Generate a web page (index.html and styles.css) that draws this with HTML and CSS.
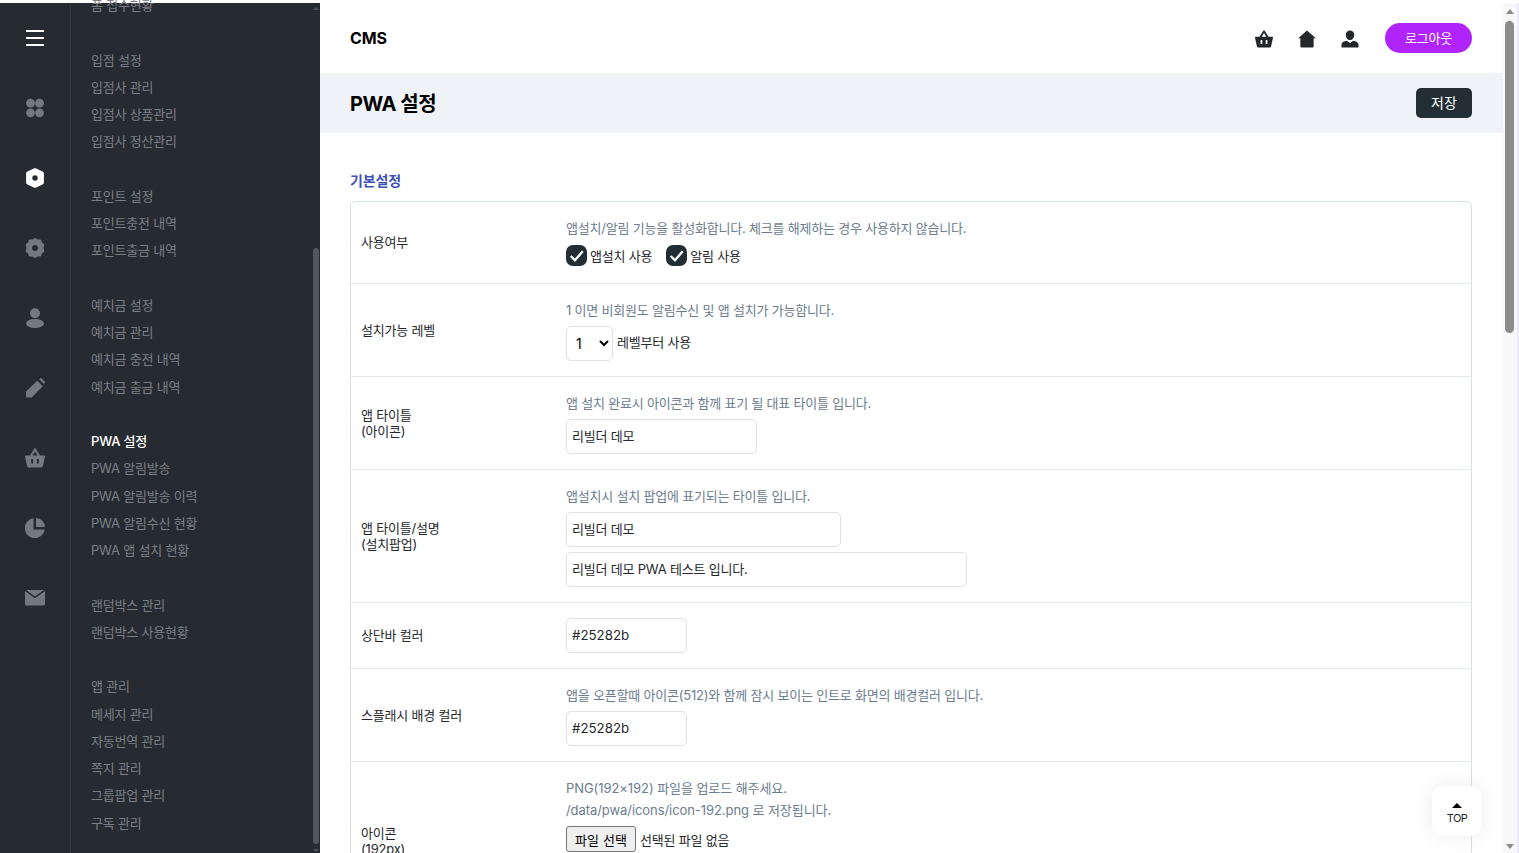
FILE: index.html
```html
<!DOCTYPE html>
<html lang="ko">
<head>
<meta charset="utf-8">
<title>PWA 설정</title>
<link rel="stylesheet" href="styles.css">
</head>
<body>
<div class="app">
  <aside class="sidebar">
    <nav class="rail">
      <a class="rail-item"><svg class="ic" viewBox="0 0 20 20"><path d="M1 2h18v2H1zM1 9h18v2H1zM1 16h18v2H1z" fill="#fff"/></svg></a>
      <a class="rail-item"><svg class="ic" viewBox="0 0 20 20"><g fill="#75797e"><circle cx="5.500" cy="5.200" r="4.400"/><circle cx="14.500" cy="5.200" r="4.400"/><circle cx="5.500" cy="14.800" r="4.400"/><circle cx="14.500" cy="14.800" r="4.400"/></g></svg></a>
      <a class="rail-item"><svg class="ic" viewBox="0 0 20 20"><path fill="#fff" fill-rule="evenodd" d="M8.800.5c.8-.4 1.600-.4 2.400 0l6.300 3.100c.8.400 1.400 1 1.400 1.900v9c0 .9-.6 1.500-1.400 1.900l-6.300 3.100c-.8.400-1.600.4-2.400 0l-6.300-3.100C1.700 16 1.100 15.400 1.100 14.500v-9c0-.9.6-1.500 1.400-1.900zM10 7.300a2.700 2.700 0 100 5.400 2.700 2.700 0 000-5.400z"/></svg></a>
      <a class="rail-item"><svg class="ic" viewBox="0 0 20 20"><path fill="#75797e" fill-rule="evenodd" d="M10 0c1 0 1.700 1.200 2.700 1.500 1 .3 2.300-.3 3.100.3.800.6.600 2 1.200 2.800.6.800 2 1.100 2.300 2.100.3 1-.7 2-.7 3.300s1 2.300.7 3.300c-.3 1-1.700 1.300-2.300 2.100-.6.800-.4 2.200-1.200 2.800-.8.600-2.100 0-3.100.3-1 .3-1.700 1.500-2.700 1.500s-1.700-1.200-2.700-1.500c-1-.3-2.300.3-3.100-.3-.8-.6-.6-2-1.200-2.800-.6-.8-2-1.100-2.300-2.100-.3-1 .7-2 .7-3.300s-1-2.300-.7-3.300c.3-1 1.700-1.300 2.300-2.100.6-.8.4-2.200 1.200-2.800.8-.6 2.100 0 3.100-.3C8.300 1.200 9 0 10 0zM10 7a3 3 0 100 6 3 3 0 000-6z"/></svg></a>
      <a class="rail-item"><svg class="ic" viewBox="0 0 20 20"><circle cx="10" cy="5.200" r="5" fill="#75797e"/><ellipse cx="10" cy="15.500" rx="9" ry="4.500" fill="#75797e"/></svg></a>
      <a class="rail-item"><svg class="ic" viewBox="0 0 20 20"><path fill="#75797e" d="M1 13.500L12.300 2.800l5.400 5.400L6.800 19.500H2c-.6 0-1-.4-1-1zM14.200 1.300L15.300.2c.3-.3.800-.3 1.100 0l3.500 3.500c.3.300.3.800 0 1.100l-1.100 1.100z"/></svg></a>
      <a class="rail-item"><svg class="ic" viewBox="0 0 20 20"><path fill="#75797e" fill-rule="evenodd" d="M5 7.500L9.200.7c.4-.6 1.200-.6 1.600 0L15 7.500h4.200c.6 0 .9.500.8 1L17.900 18c-.2.900-.9 1.500-1.800 1.500H3.900c-.9 0-1.600-.6-1.800-1.500L0 8.500c-.1-.5.200-1 .8-1zM7.500 7.500h5L10 3.400zM6.200 11v4.500h1.900V11zM11.900 11v4.500h1.900V11z"/></svg></a>
      <a class="rail-item"><svg class="ic" viewBox="0 0 20 20"><path fill="#75797e" d="M8.500.3v11.200h11.200A10 10 0 118.500.300zM11 0a9 9 0 019 9h-9z"/></svg></a>
      <a class="rail-item"><svg class="ic" viewBox="0 0 20 20"><path fill="#75797e" d="M0 3l10 7.200L20 3v13c0 .8-.7 1.500-1.500 1.500h-17C.7 17.500 0 16.800 0 16zM1.200 2h17.600L10 8.600z"/></svg></a>
    </nav>
    <div class="submenu">
      <ul class="menu">
        <li>폼 접수현황</li><li class="gap"></li>
        <li>입점 설정</li><li>입점사 관리</li><li>입점사 상품관리</li><li>입점사 정산관리</li><li class="gap"></li>
        <li>포인트 설정</li><li>포인트충전 내역</li><li>포인트출금 내역</li><li class="gap"></li>
        <li>예치금 설정</li><li>예치금 관리</li><li>예치금 충전 내역</li><li>예치금 출금 내역</li><li class="gap"></li>
        <li class="active">PWA 설정</li><li>PWA 알림발송</li><li>PWA 알림발송 이력</li><li>PWA 알림수신 현황</li><li>PWA 앱 설치 현황</li><li class="gap"></li>
        <li>랜덤박스 관리</li><li>랜덤박스 사용현황</li><li class="gap"></li>
        <li>앱 관리</li><li>메세지 관리</li><li>자동번역 관리</li><li>쪽지 관리</li><li>그룹팝업 관리</li><li>구독 관리</li>
      </ul>
      <div class="side-scroll">
        <span class="tri up"></span>
        <div class="side-track"><div class="side-thumb"></div></div>
        <span class="tri down"></span>
      </div>
    </div>
  </aside>
  <main class="main">
    <header class="topbar">
      <strong class="brand">CMS</strong>
      <div class="top-actions">
        <svg class="top-ic" viewBox="0 0 20 20"><path fill="#25282b" fill-rule="evenodd" d="M5 7.500L9.200.7c.4-.6 1.200-.6 1.600 0L15 7.500h4.200c.6 0 .9.500.8 1L17.900 18c-.2.900-.9 1.500-1.800 1.500H3.900c-.9 0-1.600-.6-1.800-1.500L0 8.500c-.1-.5.200-1 .8-1zM7.500 7.500h5L10 3.400zM6.200 11v4.500h1.900V11zM11.900 11v4.500h1.900V11z"/></svg>
        <svg class="top-ic" viewBox="0 0 20 20"><path fill="#25282b" d="M10 .5l9.800 8.700H17.400V18c0 .8-.6 1.500-1.500 1.500H4.100c-.9 0-1.500-.7-1.500-1.500V9.200H.2z"/></svg>
        <svg class="top-ic" viewBox="0 0 20 20"><path fill="#25282b" d="M10 .5a4.700 4.700 0 014.700 4.700c0 3-2 6-4.700 6s-4.700-3-4.700-6A4.700 4.700 0 0110 .5zM6.500 12l3.500 2.500 3.500-2.500c3 .5 6 1.800 6 4.500V19c0 .3-.2.500-.5.500H1c-.3 0-.5-.2-.5-.5v-2.500c0-2.700 3-4 6-4.500z"/></svg>
        <a class="logout">로그아웃</a>
      </div>
    </header>
    <div class="title-bar">
      <h1>PWA 설정</h1>
      <button class="save">저장</button>
    </div>
    <section class="content">
      <h2>기본설정</h2>
      <div class="table">
        <div class="row r1">
          <div class="th">사용여부</div>
          <div class="td">
            <p class="help">앱설치/알림 기능을 활성화합니다. 체크를 해제하는 경우 사용하지 않습니다.</p>
            <div class="checks">
              <label class="check"><span class="box"><svg viewBox="0 0 20 20"><path d="M4.500 10.500l4 4L16 6" fill="none" stroke="#fff" stroke-width="2.200"/></svg></span>앱설치 사용</label>
              <label class="check"><span class="box"><svg viewBox="0 0 20 20"><path d="M4.500 10.500l4 4L16 6" fill="none" stroke="#fff" stroke-width="2.200"/></svg></span>알림 사용</label>
            </div>
          </div>
        </div>
        <div class="row r2">
          <div class="th">설치가능 레벨</div>
          <div class="td">
            <p class="help">1 이면 비회원도 알림수신 및 앱 설치가 가능합니다.</p>
            <div class="inline"><select class="sel"><option>1</option></select><span class="inline-text">레벨부터 사용</span></div>
          </div>
        </div>
        <div class="row r2">
          <div class="th">앱 타이틀<br>(아이콘)</div>
          <div class="td">
            <p class="help">앱 설치 완료시 아이콘과 함께 표기 될 대표 타이틀 입니다.</p>
            <input class="inp w191" value="리빌더 데모">
          </div>
        </div>
        <div class="row r4">
          <div class="th">앱 타이틀/설명<br>(설치팝업)</div>
          <div class="td">
            <p class="help">앱설치시 설치 팝업에 표기되는 타이틀 입니다.</p>
            <input class="inp w275" value="리빌더 데모">
            <input class="inp w401" value="리빌더 데모 PWA 테스트 입니다.">
          </div>
        </div>
        <div class="row r5">
          <div class="th">상단바 컬러</div>
          <div class="td"><input class="inp w121 code" value="#25282b"></div>
        </div>
        <div class="row r2">
          <div class="th">스플래시 배경 컬러</div>
          <div class="td">
            <p class="help">앱을 오픈할때 아이콘(512)와 함께 잠시 보이는 인트로 화면의 배경컬러 입니다.</p>
            <input class="inp w121 code" value="#25282b">
          </div>
        </div>
        <div class="row r7">
          <div class="th">아이콘<br>(192px)</div>
          <div class="td td-top">
            <p class="help latin">PNG(192×192) 파일을 업로드 해주세요.</p>
            <p class="help latin">/data/pwa/icons/icon-192.png 로 저장됩니다.</p>
            <div class="file"><span class="file-btn">파일 선택</span><span>선택된 파일 없음</span></div>
          </div>
        </div>
      </div>
    </section>
    <a class="top-btn"><span class="top-arr"></span>TOP</a>
  </main>
  <div class="page-scroll">
    <span class="arr up"></span>
    <div class="page-track"><div class="page-thumb"></div></div>
    <span class="arr down"></span>
  </div>
</div>
</body>
</html>
```

FILE: styles.css
```css
* { box-sizing: border-box; }
html, body { margin: 0; height: 100%; overflow: hidden; background: #fff; }
body { padding-top: 3px; font-family: Inter, "Noto Sans CJK KR", sans-serif; font-size: 13px; letter-spacing: -0.2px; color: #25282b; }
p, h1, h2, ul { margin: 0; padding: 0; }
.app { display: flex; height: 850px; }

.sidebar { flex: 0 0 320px; display: flex; background: #262b31; }
.rail { flex: 0 0 71px; border-right: 1px solid #353a41; display: flex; flex-direction: column; }
.rail-item { flex: 0 0 70px; display: flex; align-items: center; justify-content: center; }
.ic { width: 20px; height: 20px; display: block; }
.submenu { flex: 1; display: flex; min-width: 0; }
.menu { flex: 1; list-style: none; margin-top: -10.9px; padding-left: 20px; }
.menu li { height: 27.25px; line-height: 27.25px; color: #7a7f85; white-space: nowrap; }
.menu li.active { color: #fff; font-weight: 500; }
.side-scroll { flex: 0 0 9px; display: flex; flex-direction: column; align-items: center; }
.side-track { flex: 1; width: 6px; }
.side-thumb { margin-top: 235px; height: 596px; background: #52565e; border-radius: 3px; }
.tri { flex: 0 0 auto; width: 0; height: 0; border-left: 3px solid transparent; border-right: 3px solid transparent; margin: 4px 0 3px; }
.tri.up { border-bottom: 3px solid #50545b; }
.tri.down { border-top: 3px solid #50545b; margin: 3px 0 1px; }

.main { flex: 1; min-width: 0; position: relative; overflow: hidden; }
.topbar { height: 70px; display: flex; align-items: center; justify-content: space-between; padding: 0 31px 0 30px; }
.brand { font-size: 16px; font-weight: 700; color: #000; letter-spacing: -0.15px; }
.top-actions { display: flex; align-items: center; }
.top-ic { width: 18px; height: 18px; margin: 2px 25px 0 0; display: block; }
.top-ic:nth-of-type(3) { margin-right: 26px; }
.logout { width: 87px; height: 30px; padding-bottom: 2px; border-radius: 15px; background: #b123fb; color: #fff; display: flex; align-items: center; justify-content: center; }

.title-bar { height: 60px; background: #eff3f8; display: flex; align-items: center; justify-content: space-between; padding: 0 31px 0 30px; }
.title-bar h1 { font-size: 20px; font-weight: 700; color: #000; letter-spacing: -0.4px; padding-bottom: 2px; }
.save { width: 56px; height: 30px; padding: 0 0 2px; border: 0; border-radius: 5px; background: #222d34; color: #fff; font: 14px Inter, "Noto Sans CJK KR", sans-serif; }

.content { padding: 38px 31px 0 30px; }
.content h2 { font-size: 14px; font-weight: 600; line-height: 20px; letter-spacing: -0.1px; color: #3f51b5; margin-bottom: 10px; }
.table { border: 1px solid #d9dfe8; border-radius: 5px; }
.row { display: flex; align-items: center; border-bottom: 1px solid #e5e8ee; padding: 0 10px; }
.r1 { height: 82px; padding-bottom: 2px; }
.r2 { height: 93px; }
.r4 { height: 133px; }
.r5 { height: 66px; }
.r5 .th { padding-bottom: 2px; }
.r7 { height: 158px; }
.th { flex: 0 0 205px; line-height: 16px; color: #25282b; }
.td { flex: 1; display: flex; flex-direction: column; align-items: flex-start; }
.td-top { align-self: flex-start; padding-top: 15px; }
.help { line-height: 22px; color: #6b7d8e; }
.help.latin { letter-spacing: -0.07px; }
.checks { display: flex; gap: 14px; margin-top: 6px; }
.check { display: flex; align-items: center; gap: 3px; }
.box { width: 21px; height: 21px; border-radius: 7px; background: #222d34; display: block; }
.box svg { display: block; width: 21px; height: 21px; }
.inline { display: flex; align-items: center; gap: 4px; margin-top: 5px; }
.inline-text { padding-bottom: 5px; }
.sel { width: 47px; height: 35px; border: 1px solid #dde1e6; border-radius: 5px; background: #fff; padding: 0 5px; font: 14px Inter, sans-serif; color: #000; }
.inp { height: 35px; border: 1px solid #dde1e6; border-radius: 5px; padding: 0 5px 2px; margin-top: 5px; font: 13px Inter, "Noto Sans CJK KR", sans-serif; letter-spacing: -0.2px; color: #25282b; background: #fff; display: block; }
.inp.code { font-size: 13.3px; letter-spacing: 0; }
.r5 .inp { margin-top: 0; }
.w121 { width: 121px; }
.w191 { width: 191px; }
.w275 { width: 275px; }
.w401 { width: 401px; }
.file { display: flex; align-items: center; gap: 4px; margin-top: 5px; }
.file-btn { width: 70px; height: 26px; border: 1px solid #767676; border-radius: 3px; background: #efefef; display: flex; align-items: center; justify-content: center; color: #000; letter-spacing: 0.1px; }

.top-btn { position: absolute; right: 21px; top: 783px; width: 50px; height: 50px; padding-top: 5px; border-radius: 10px; background: #fff; box-shadow: 0 0 20px rgba(0,0,0,.08); display: flex; flex-direction: column; align-items: center; justify-content: center; font-size: 11px; line-height: 14px; letter-spacing: -0.6px; color: #25282b; }
.top-arr { width: 0; height: 0; border-left: 5px solid transparent; border-right: 5px solid transparent; border-bottom: 5px solid #000; margin-bottom: 3px; }

.page-scroll { flex: 0 0 16px; background: #f8f8fb; border-right: 2px solid #e9ebfb; margin-right: 0; display: flex; flex-direction: column; align-items: center; padding-right: 1px; }
.page-track { flex: 1; width: 100%; padding: 0 2px; }
.page-thumb { margin-top: 3px; height: 312px; background: #8c8c8c; border-radius: 5px; }
.arr { flex: 0 0 auto; width: 0; height: 0; border-left: 4px solid transparent; border-right: 4px solid transparent; margin: 6px 0 4px; }
.arr.up { border-bottom: 5px solid #8a8a8a; }
.arr.down { border-top: 5px solid #8a8a8a; margin: 4px 0; }
```
